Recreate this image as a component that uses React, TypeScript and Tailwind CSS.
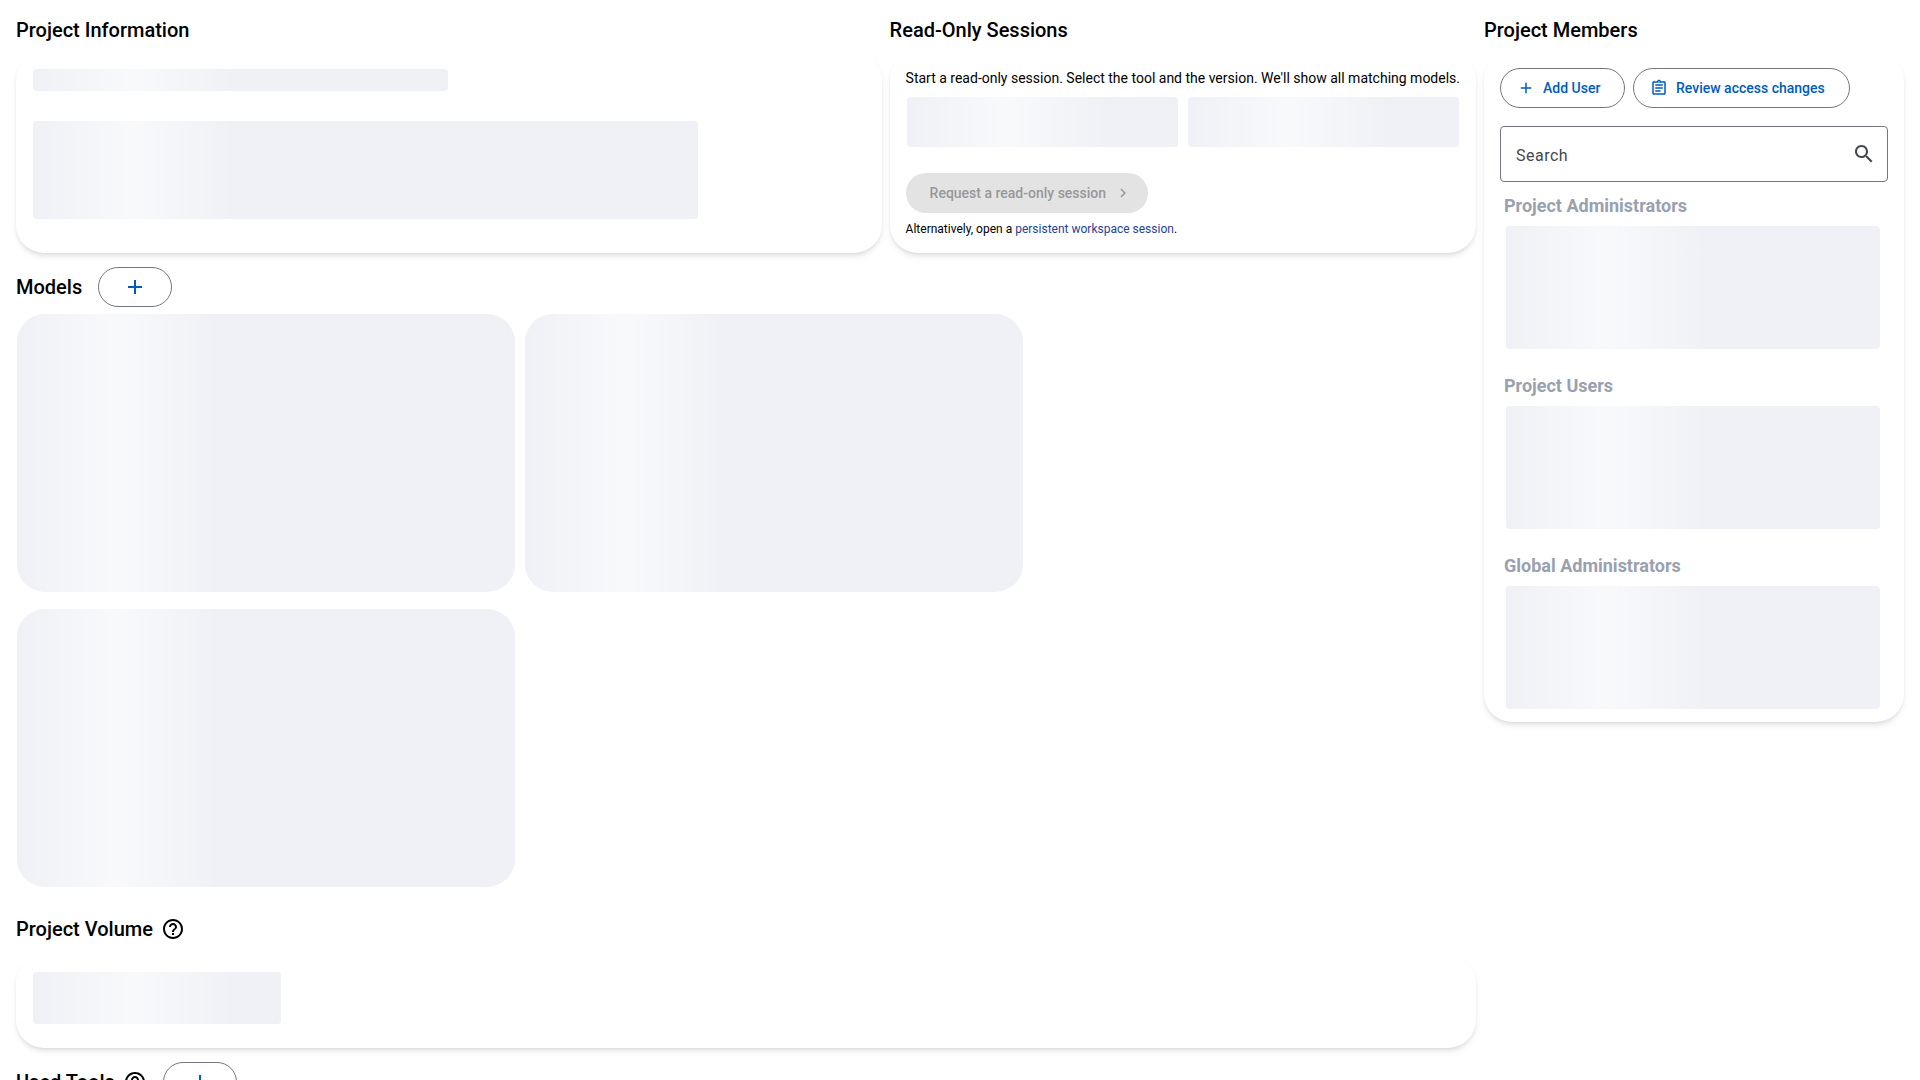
import type { ReactNode } from "react";

function Skeleton({ className }: { className: string }) {
  return (
    <div
      className={`bg-[#eff1f6] bg-[linear-gradient(90deg,rgba(255,255,255,0),rgba(255,255,255,0.6),rgba(255,255,255,0))] bg-[length:200px_100%] bg-no-repeat ${className}`}
    />
  );
}

function Card({ className, children }: { className: string; children: ReactNode }) {
  return <div className={`rounded-[28px] bg-white shadow-md ${className}`}>{children}</div>;
}

const paths = {
  add: "M19 13h-6v6h-2v-6H5v-2h6V5h2v6h6v2z",
  search:
    "M15.5 14h-.79l-.28-.27C15.41 12.59 16 11.11 16 9.5 16 5.91 13.09 3 9.5 3S3 5.91 3 9.5 5.91 16 9.5 16c1.61 0 3.09-.59 4.23-1.57l.27.28v.79l5 4.99L20.49 19l-4.99-5zm-6 0C7.01 14 5 11.99 5 9.5S7.01 5 9.5 5 14 7.01 14 9.5 11.99 14 9.5 14z",
  chevron: "M10 6 8.59 7.41 13.17 12l-4.58 4.59L10 18l6-6z",
  assignment:
    "M7 15h7v2H7zm0-4h10v2H7zm0-4h10v2H7zm12-4h-4.18C14.4 1.84 13.3 1 12 1s-2.4.84-2.82 2H5c-1.1 0-2 .9-2 2v14c0 1.100.9 2 2 2h14c1.100 0 2-.9 2-2V5c0-1.100-.9-2-2-2zm-7-.25c.41 0 .75.34.75.75s-.34.75-.75.75-.75-.34-.75-.75.34-.75.75-.75zM19 19H5V5h14v14z",
  help: "M11 18h2v-2h-2v2zm1-16C6.480 2 2 6.480 2 12s4.480 10 10 10 10-4.480 10-10S17.520 2 12 2zm0 18c-4.410 0-8-3.590-8-8s3.590-8 8-8 8 3.590 8 8-3.590 8-8 8zm0-14c-2.210 0-4 1.790-4 4h2c0-1.100.9-2 2-2s2 .9 2 2c0 2-3 1.750-3 5h2c0-2.250 3-2.500 3-5 0-2.210-1.790-4-4-4z",
};

function Icon({ name, className }: { name: keyof typeof paths; className: string }) {
  return (
    <svg viewBox="0 0 24 24" fill="currentColor" className={`shrink-0 ${className}`}>
      <path d={paths[name]} />
    </svg>
  );
}

function Title({ children }: { children: ReactNode }) {
  return <h2 className="text-xl leading-7 font-medium whitespace-nowrap">{children}</h2>;
}

function PlusButton() {
  return (
    <button className="ml-4 flex h-10 w-[74px] items-center justify-center rounded-full border border-[#74777f] text-[#005cbb]">
      <Icon name="add" className="size-6" />
    </button>
  );
}

function MemberGroup({ title }: { title: string }) {
  return (
    <div className="h-[180px]">
      <h3 className="ml-1 text-lg leading-7 font-bold text-gray-400">{title}</h3>
      <Skeleton className="mt-[6px] ml-[6px] h-[123px] w-[374px] rounded" />
    </div>
  );
}

export default function App() {
  return (
    <div className="flex h-[1080px] gap-2 overflow-hidden bg-white px-4 pt-4 font-[Roboto,sans-serif] text-black">
      <main className="w-[1460px] shrink-0">
        <div className="flex gap-2">
          <section className="w-[865.6px]">
            <Title>Project Information</Title>
            <Card className="mt-2 h-[201px] px-[17px] pt-[17px]">
              <Skeleton className="h-[22px] w-[415px] rounded" />
              <Skeleton className="mt-[30px] h-[98px] w-[665px] rounded" />
            </Card>
          </section>
          <section className="w-[586.4px]">
            <Title>Read-Only Sessions</Title>
            <Card className="mt-2 h-[201px] px-4 pt-4">
              <p className="text-sm leading-5 whitespace-nowrap">
                Start a read-only session. Select the tool and the version. We'll show all matching models.
              </p>
              <div className="mt-[9px] ml-px flex gap-[10px]">
                <Skeleton className="h-[50px] w-[271px] rounded" />
                <Skeleton className="h-[50px] w-[271px] rounded" />
              </div>
              <button className="mt-[26px] flex h-10 w-[242px] items-center rounded-full bg-[#e3e3e3] pl-6 text-sm font-medium whitespace-nowrap text-[#989899]">
                Request a read-only session
                <Icon name="chevron" className="ml-2 size-[18px]" />
              </button>
              <p className="mt-2 text-xs leading-4">
                Alternatively, open a <a className="text-[#253f93]">persistent workspace session</a>.
              </p>
            </Card>
          </section>
        </div>

        <div className="mt-[14px] flex h-10 items-center">
          <Title>Models</Title>
          <PlusButton />
        </div>
        <div className="mt-[7px] ml-px flex flex-wrap gap-x-[10px] gap-y-[17px] pr-[430px]">
          <Skeleton className="h-[278px] w-[498px] rounded-[28px]" />
          <Skeleton className="h-[278px] w-[498px] rounded-[28px]" />
          <Skeleton className="h-[278px] w-[498px] rounded-[28px]" />
        </div>

        <div className="mt-[28px] flex h-7 items-center gap-2">
          <Title>Project Volume</Title>
          <Icon name="help" className="size-6" />
        </div>
        <Card className="mt-3 h-[93px] px-[17px] pt-[17px]">
          <Skeleton className="h-[52px] w-[248px] rounded" />
        </Card>

        <div className="mt-[14px] flex h-10 items-center">
          <Title>Used Tools</Title>
          <Icon name="help" className="ml-2 size-6" />
          <PlusButton />
        </div>
      </main>

      <aside className="w-[420px] shrink-0">
        <Title>Project Members</Title>
        <Card className="mt-2 h-[670px] px-4 pt-4">
          <div className="flex gap-2 text-sm font-medium text-[#005cbb]">
            <button className="flex h-10 w-[125px] items-center rounded-full border border-[#74777f] pl-4">
              <Icon name="add" className="size-[18px]" />
              <span className="ml-2">Add User</span>
            </button>
            <button className="flex h-10 w-[217px] items-center rounded-full border border-[#74777f] pl-4">
              <Icon name="assignment" className="size-[18px]" />
              <span className="ml-2">Review access changes</span>
            </button>
          </div>
          <div className="mt-[18px] flex h-14 items-center justify-between rounded border border-[#74777f] pr-[11px] pl-[15px] text-[#44474e]">
            <span className="pt-[3px] text-base tracking-[0.5px]">Search</span>
            <Icon name="search" className="size-6" />
          </div>
          <div className="mt-[10px]">
            <MemberGroup title="Project Administrators" />
            <MemberGroup title="Project Users" />
            <MemberGroup title="Global Administrators" />
          </div>
        </Card>
      </aside>
    </div>
  );
}
